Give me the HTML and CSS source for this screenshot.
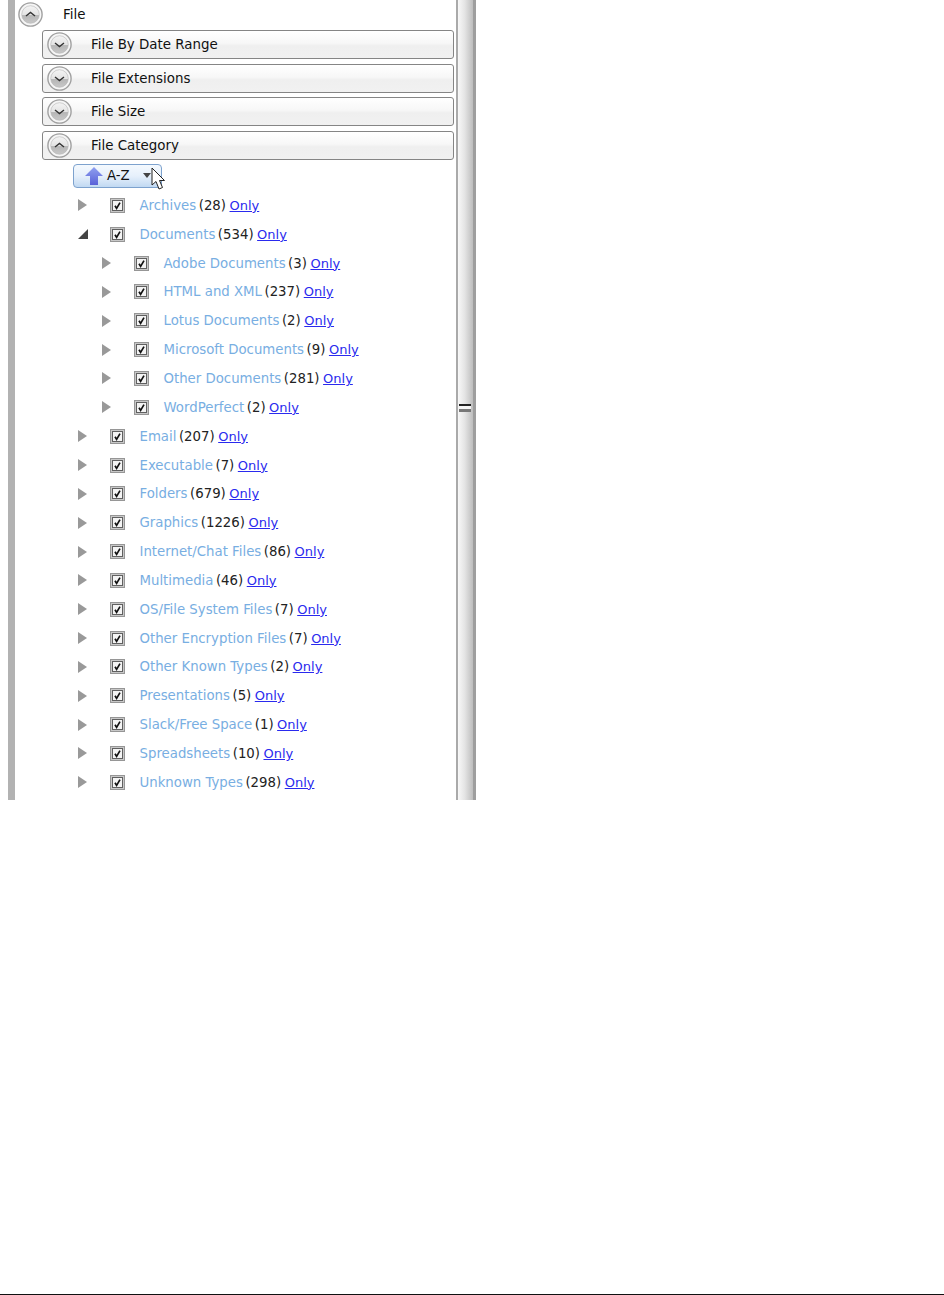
FILE: index.html
```html
<!DOCTYPE html>
<html lang="en">
<head>
<meta charset="utf-8">
<title>File filters</title>
<link rel="stylesheet" href="styles.css">
</head>
<body>
<svg width="0" height="0" class="defs" aria-hidden="true">
  <defs>
    <linearGradient id="face" x1="0" y1="0" x2="0" y2="1">
      <stop offset="0" stop-color="#f4f4f4"/><stop offset="0.5" stop-color="#e4e4e4"/><stop offset="0.56" stop-color="#b6b6b6"/><stop offset="1" stop-color="#c8c8c8"/>
    </linearGradient>
    <symbol id="expander" viewBox="0 0 25 25">
      <circle cx="12.5" cy="12.5" r="11.6" fill="#f6f6f6" stroke="#a0a0a0" stroke-width="1.4"/>
      <circle cx="12.5" cy="12.5" r="8.8" fill="url(#face)" stroke="#b4b4b4" stroke-width="0.6"/>
    </symbol>
    <symbol id="check" viewBox="0 0 15 15">
      <rect x="0.5" y="0.5" width="14" height="14" fill="#c8c8c8" stroke="#969696"/>
      <rect x="2.5" y="2.5" width="10" height="10" fill="#f4f4f4" stroke="#606060"/>
      <path d="M5 7.8 L6.6 10.4 L10 4.6" fill="none" stroke="#111" stroke-width="1.7"/>
    </symbol>
  </defs>
</svg>
<div class="page">
  <main class="panel">
    <div class="panel-body">
      <div class="root-head">
        <svg class="exp"><use href="#expander"/><path class="chev" d="M8 14 L12.5 10.5 L17 14"/></svg>
        <span class="title">File</span>
      </div>
      <div class="sections">
        <div class="section-head"><svg class="exp"><use href="#expander"/><path class="chev" d="M8 11 L12.5 14.5 L17 11"/></svg><span class="title">File By Date Range</span></div>
        <div class="section-head"><svg class="exp"><use href="#expander"/><path class="chev" d="M8 11 L12.5 14.5 L17 11"/></svg><span class="title">File Extensions</span></div>
        <div class="section-head"><svg class="exp"><use href="#expander"/><path class="chev" d="M8 11 L12.5 14.5 L17 11"/></svg><span class="title">File Size</span></div>
        <div class="section-head"><svg class="exp"><use href="#expander"/><path class="chev" d="M8 14 L12.5 10.5 L17 14"/></svg><span class="title">File Category</span></div>
      </div>
      <div class="sort-wrap">
        <button class="sort" type="button">
          <svg class="sort-arrow" viewBox="0 0 18 18"><defs><linearGradient id="ua" x1="0" y1="0" x2="0" y2="1"><stop offset="0" stop-color="#8fa0f0"/><stop offset="1" stop-color="#5a62d8"/></linearGradient></defs><path d="M9 0 L18 9 L13 9 L13 18 L5 18 L5 9 L0 9 Z" fill="url(#ua)"/></svg>
          <span class="sort-label">A-Z</span>
          <span class="sort-caret"></span>
        </button>
        <svg class="cursor" viewBox="0 0 16 25"><path d="M1 1 L1 18 L5 14.5 L8 22 L11.5 20.5 L8.5 13.5 L13.5 13.5 Z" fill="#fff" stroke="#222" stroke-width="1"/></svg>
      </div>
      <ul class="tree">
        <li class="row"><span class="tri"></span><svg class="cb"><use href="#check"/></svg><span class="name">Archives</span><span class="count">(28)</span><a class="only" href="#">Only</a></li>
        <li class="row"><span class="tri open"></span><svg class="cb"><use href="#check"/></svg><span class="name">Documents</span><span class="count">(534)</span><a class="only" href="#">Only</a></li>
        <li class="row sub"><span class="tri"></span><svg class="cb"><use href="#check"/></svg><span class="name">Adobe Documents</span><span class="count">(3)</span><a class="only" href="#">Only</a></li>
        <li class="row sub"><span class="tri"></span><svg class="cb"><use href="#check"/></svg><span class="name">HTML and XML</span><span class="count">(237)</span><a class="only" href="#">Only</a></li>
        <li class="row sub"><span class="tri"></span><svg class="cb"><use href="#check"/></svg><span class="name">Lotus Documents</span><span class="count">(2)</span><a class="only" href="#">Only</a></li>
        <li class="row sub"><span class="tri"></span><svg class="cb"><use href="#check"/></svg><span class="name">Microsoft Documents</span><span class="count">(9)</span><a class="only" href="#">Only</a></li>
        <li class="row sub"><span class="tri"></span><svg class="cb"><use href="#check"/></svg><span class="name">Other Documents</span><span class="count">(281)</span><a class="only" href="#">Only</a></li>
        <li class="row sub"><span class="tri"></span><svg class="cb"><use href="#check"/></svg><span class="name">WordPerfect</span><span class="count">(2)</span><a class="only" href="#">Only</a></li>
        <li class="row"><span class="tri"></span><svg class="cb"><use href="#check"/></svg><span class="name">Email</span><span class="count">(207)</span><a class="only" href="#">Only</a></li>
        <li class="row"><span class="tri"></span><svg class="cb"><use href="#check"/></svg><span class="name">Executable</span><span class="count">(7)</span><a class="only" href="#">Only</a></li>
        <li class="row"><span class="tri"></span><svg class="cb"><use href="#check"/></svg><span class="name">Folders</span><span class="count">(679)</span><a class="only" href="#">Only</a></li>
        <li class="row"><span class="tri"></span><svg class="cb"><use href="#check"/></svg><span class="name">Graphics</span><span class="count">(1226)</span><a class="only" href="#">Only</a></li>
        <li class="row"><span class="tri"></span><svg class="cb"><use href="#check"/></svg><span class="name">Internet/Chat Files</span><span class="count">(86)</span><a class="only" href="#">Only</a></li>
        <li class="row"><span class="tri"></span><svg class="cb"><use href="#check"/></svg><span class="name">Multimedia</span><span class="count">(46)</span><a class="only" href="#">Only</a></li>
        <li class="row"><span class="tri"></span><svg class="cb"><use href="#check"/></svg><span class="name">OS/File System Files</span><span class="count">(7)</span><a class="only" href="#">Only</a></li>
        <li class="row"><span class="tri"></span><svg class="cb"><use href="#check"/></svg><span class="name">Other Encryption Files</span><span class="count">(7)</span><a class="only" href="#">Only</a></li>
        <li class="row"><span class="tri"></span><svg class="cb"><use href="#check"/></svg><span class="name">Other Known Types</span><span class="count">(2)</span><a class="only" href="#">Only</a></li>
        <li class="row"><span class="tri"></span><svg class="cb"><use href="#check"/></svg><span class="name">Presentations</span><span class="count">(5)</span><a class="only" href="#">Only</a></li>
        <li class="row"><span class="tri"></span><svg class="cb"><use href="#check"/></svg><span class="name">Slack/Free Space</span><span class="count">(1)</span><a class="only" href="#">Only</a></li>
        <li class="row"><span class="tri"></span><svg class="cb"><use href="#check"/></svg><span class="name">Spreadsheets</span><span class="count">(10)</span><a class="only" href="#">Only</a></li>
        <li class="row"><span class="tri"></span><svg class="cb"><use href="#check"/></svg><span class="name">Unknown Types</span><span class="count">(298)</span><a class="only" href="#">Only</a></li>
      </ul>
    </div>
    <div class="splitter"><span class="grip"></span></div>
  </main>
  <div class="rule"></div>
</div>
</body>
</html>
```
FILE: styles.css
```css
* { box-sizing: border-box; }
html, body { margin: 0; padding: 0; background: #fff; }
body { font-family: "DejaVu Sans", "Liberation Sans", sans-serif; font-size: 13.3px; color: #222; }
.defs { position: absolute; }
.page { height: 1295px; display: flex; flex-direction: column; justify-content: space-between; }
.rule { height: 1px; background: #111; }

.panel { width: 468px; height: 800px; margin-left: 8px; display: flex; overflow: hidden; }
.panel-body {
  width: 448px; flex: none; padding-top: 1px; padding-left: 3px;
  border-left: 7px solid #b2b2b2;
}
.splitter {
  flex: none; width: 20px; display: flex; align-items: center; justify-content: center;
  border-left: 2px solid #aaa; border-right: 3px solid #9e9e9e;
  background: linear-gradient(90deg, #f8f8f8, #e4e4e4 45%, #bdbdbd);
}
.grip {
  width: 12px; height: 8px; margin-top: 15px; margin-left: -1px;
  border-top: 2px solid #222; border-bottom: 3px solid #777;
  background: #f4f4f4;
}

.exp { width: 25px; height: 25px; flex: none; display: block; }
.chev { fill: none; stroke: #333; stroke-width: 1.4; }
.title { color: #111; font-size: 13.4px; }

.root-head { height: 27px; display: flex; align-items: center; }
.root-head .title { margin-left: 20px; }

.sections { margin-left: 24px; margin-top: 2px; display: flex; flex-direction: column; gap: 4.5px; width: 412px; }
.section-head {
  height: 29px; display: flex; align-items: center; padding-left: 4px;
  border: 1px solid #858585; border-radius: 3px;
  background: linear-gradient(180deg, #fff 0%, #f7f7f7 45%, #efefef 55%, #f1f1f1 100%);
}
.section-head .title { margin-left: 19px; }

.sort-wrap { position: relative; margin-left: 55px; margin-top: 4px; height: 24px; }
.sort {
  width: 89px; height: 24px; padding: 0 0 0 11px; display: flex; align-items: center;
  border: 1px solid #7da2ce; border-radius: 4px; font: inherit; color: #111;
  background: linear-gradient(180deg, #f4f9fe 0%, #e6f0fb 50%, #c1d9f2 100%);
}
.sort-arrow { width: 18px; height: 18px; flex: none; }
.sort-label { margin-left: 4px; }
.sort-caret {
  margin-left: 13px; width: 0; height: 0;
  border-left: 4px solid transparent; border-right: 4px solid transparent; border-top: 5px solid #444;
}
.cursor { position: absolute; left: 78px; top: 3px; width: 16px; height: 25px; }

.tree { list-style: none; margin: 3.5px 0 0; padding: 0; }
.row { height: 28.85px; display: flex; align-items: center; padding-left: 60px; white-space: nowrap; }
.row.sub { padding-left: 84px; }
.tri {
  width: 0; height: 0; flex: none; margin-right: 22.5px;
  border-top: 6px solid transparent; border-bottom: 6px solid transparent; border-left: 9px solid #999;
}
.tri.open {
  border-top: 0; border-left: 10px solid transparent; border-right: 0; margin-right: 21.5px;
  border-bottom: 10px solid #444;
}
.cb { width: 15px; height: 15px; flex: none; }
.name { margin-left: 15px; color: #78aee2; }
.count { margin-left: 2.5px; color: #222; }
.only { margin-left: 3.5px; font-size: 13px; color: #2a2aee; text-decoration: underline; }
```
